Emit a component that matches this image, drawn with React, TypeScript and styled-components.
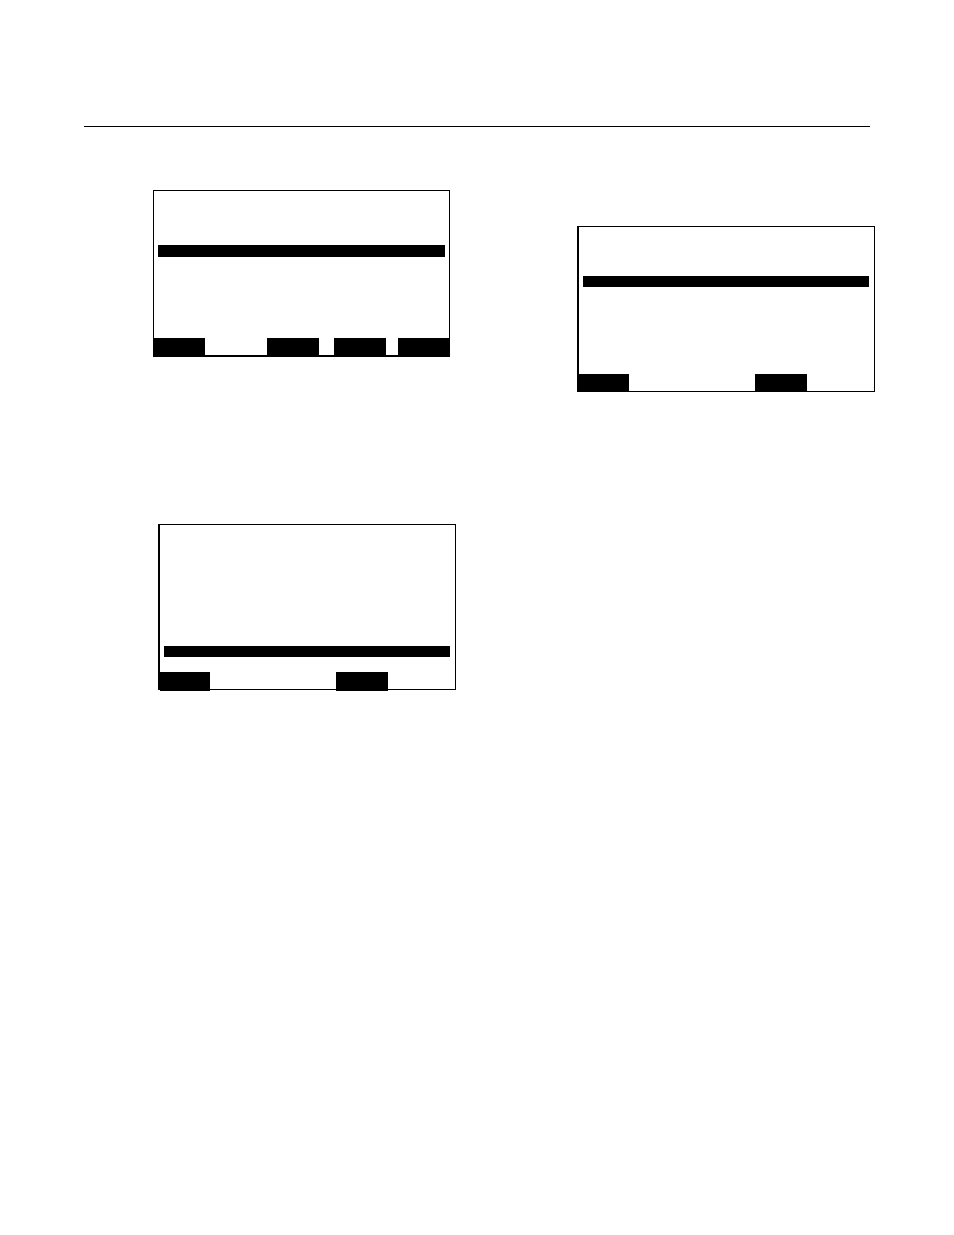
import React from "react";
import styled, { createGlobalStyle } from "styled-components";

const GlobalStyle = createGlobalStyle`
  *, *::before, *::after {
    box-sizing: border-box;
  }
  body {
    margin: 0;
    background: #fff;
    color: #000;
    font-family: "Liberation Sans", Arial, sans-serif;
  }
`;

const Page = styled.main`
  min-height: 100vh;
  padding-top: 126px;
`;

const Rule = styled.hr`
  height: 1px;
  margin: 0 84px;
  border: 0;
  background: #000;
`;

const Columns = styled.div`
  display: grid;
  grid-template-columns: 303fr 298fr;
  column-gap: 121px;
  align-items: start;
  padding: 63px 79px 0 153px;
`;

const Column = styled.div<{ $top?: number }>`
  display: flex;
  flex-direction: column;
  gap: 167px;
  padding-top: ${({ $top = 0 }) => $top}px;
`;

const Screen = styled.section<{ $edges: string; $margin?: string }>`
  display: flex;
  flex-direction: column;
  margin: ${({ $margin = "0" }) => $margin};
  border-style: solid;
  border-color: #000;
  border-width: ${({ $edges }) => $edges};
`;

const Display = styled.div<{ $padding: string }>`
  height: 147px;
  padding: ${({ $padding }) => $padding};
`;

const SelectedLine = styled.div<{ $height: number }>`
  height: ${({ $height }) => $height}px;
  background: #000;
`;

const SoftKeys = styled.div`
  display: flex;
  height: 17px;
`;

const SoftKey = styled.button<{ $width: number; $gap: number; $height: number }>`
  flex: none;
  width: ${({ $width }) => $width}px;
  height: ${({ $height }) => $height}px;
  margin: 0 0 0 ${({ $gap }) => $gap}px;
  padding: 0;
  border: 0;
  border-radius: 0;
  background: #000;
`;

type Key = { width: number; gap: number };

type PanelProps = {
  edges: string;
  margin?: string;
  padding: string;
  lineHeight: number;
  keys: Key[];
  keyHeight?: number;
};

const fourKeys: Key[] = [
  { width: 51, gap: 0 },
  { width: 52, gap: 62 },
  { width: 52, gap: 15 },
  { width: 51, gap: 12 },
];

const twoKeys: Key[] = [
  { width: 50, gap: 0 },
  { width: 52, gap: 126 },
];

function Panel({ edges, margin, padding, lineHeight, keys, keyHeight = 17 }: PanelProps) {
  return (
    <Screen $edges={edges} $margin={margin}>
      <Display $padding={padding}>
        <SelectedLine $height={lineHeight} />
      </Display>
      <SoftKeys>
        {keys.map((key, i) => (
          <SoftKey
            key={i}
            type="button"
            aria-label={`Soft key ${i + 1}`}
            $width={key.width}
            $gap={key.gap}
            $height={keyHeight}
          />
        ))}
      </SoftKeys>
    </Screen>
  );
}

export default function App() {
  return (
    <>
      <GlobalStyle />
      <Page>
        <Rule />
        <Columns>
          <Column>
            <Panel
              edges="1px 1px 2px 1px"
              margin="0 6px 0 0"
              padding="54px 4px 0"
              lineHeight={12}
              keys={fourKeys}
            />
            <Panel
              edges="1px 1px 1px 2px"
              margin="0 0 0 5px"
              padding="121px 5px 0 4px"
              lineHeight={11}
              keys={twoKeys}
              keyHeight={19}
            />
          </Column>
          <Column $top={36}>
            <Panel
              edges="1px 1px 1px 2px"
              padding="49px 5px 0 4px"
              lineHeight={11}
              keys={twoKeys}
            />
          </Column>
        </Columns>
      </Page>
    </>
  );
}
